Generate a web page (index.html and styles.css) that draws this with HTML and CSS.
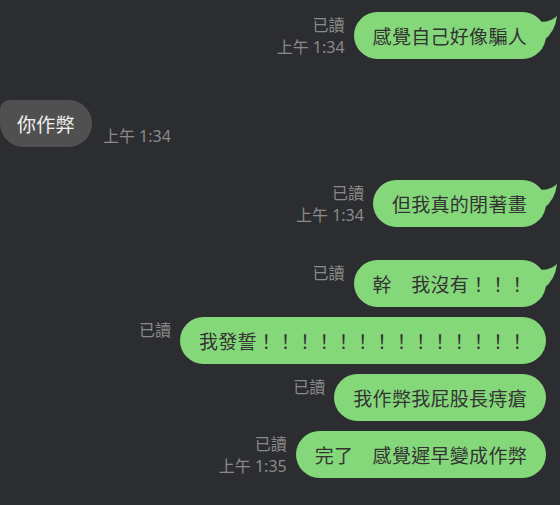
FILE: index.html
```html
<html>
<head>
    <title>Chat</title>
    <link rel="stylesheet" href="styles.css">
</head>
<body>
<div class="chat">
    <div class="row out">
        <div class="meta"><span>已讀</span><span>上午 1:34</span></div>
        <div class="bubble green">感覺自己好像騙人<svg class="tail" viewBox="0 0 22 28" width="22" height="28"><path d="M0 9 Q12 12 21 4 Q19 20 8 28 L0 28 Z"/></svg></div>
    </div>

    <div class="row in">
        <div class="bubble gray">你作弊</div>
        <div class="meta"><span>上午 1:34</span></div>
    </div>

    <div class="row out group">
        <div class="meta"><span>已讀</span><span>上午 1:34</span></div>
        <div class="bubble green">但我真的閉著畫<svg class="tail" viewBox="0 0 22 28" width="22" height="28"><path d="M0 9 Q12 12 21 4 Q19 20 8 28 L0 28 Z"/></svg></div>
    </div>

    <div class="row out group">
        <div class="meta"><span>已讀</span></div>
        <div class="bubble green">幹　我沒有！！！<svg class="tail" viewBox="0 0 22 28" width="22" height="28"><path d="M0 9 Q12 12 21 4 Q19 20 8 28 L0 28 Z"/></svg></div>
    </div>
    <div class="row out">
        <div class="meta"><span>已讀</span></div>
        <div class="bubble green">我發誓！！！！！！！！！！！！！！</div>
    </div>
    <div class="row out">
        <div class="meta"><span>已讀</span></div>
        <div class="bubble green">我作弊我屁股長痔瘡</div>
    </div>
    <div class="row out">
        <div class="meta"><span>已讀</span><span>上午 1:35</span></div>
        <div class="bubble green">完了　感覺遲早變成作弊</div>
    </div>
</div>
</body>
</html>
```

FILE: styles.css
```css
body {
    margin: 0;
    background-color: #2c2d30;
    font-family: "Noto Sans CJK TC", "Noto Sans", sans-serif;
}
.chat {
    padding: 12px 14px 20px 0;
}
.row {
    display: flex;
    gap: 9px;
}
.row + .row {
    margin-top: 10px;
}
.row.group {
    margin-top: 33px;
}
.row.out {
    justify-content: flex-end;
    align-items: flex-start;
}
.row.in {
    justify-content: flex-start;
    align-items: flex-end;
    gap: 11px;
    margin-top: 41px;
}
.meta {
    display: flex;
    flex-direction: column;
    align-items: flex-end;
    padding-top: 2px;
    font-family: "Noto Sans", "Noto Sans CJK TC", sans-serif;
    font-size: 16px;
    line-height: 22px;
    color: #8a8a8a;
    white-space: nowrap;
}
.row.in .meta {
    padding: 0;
}
.bubble {
    position: relative;
    padding: 10px 19px;
    font-size: 19px;
    letter-spacing: 0.3px;
    line-height: 27px;
    border-radius: 24px;
    white-space: nowrap;
}
.green {
    background-color: #85d87a;
    color: #333;
}
.gray {
    background-color: #505050;
    color: #f0f0f0;
    padding: 10px 17px;
    border-radius: 10px 24px 24px 24px;
}
.tail {
    position: absolute;
    top: 0;
    right: -12px;
    fill: #85d87a;
}
```
